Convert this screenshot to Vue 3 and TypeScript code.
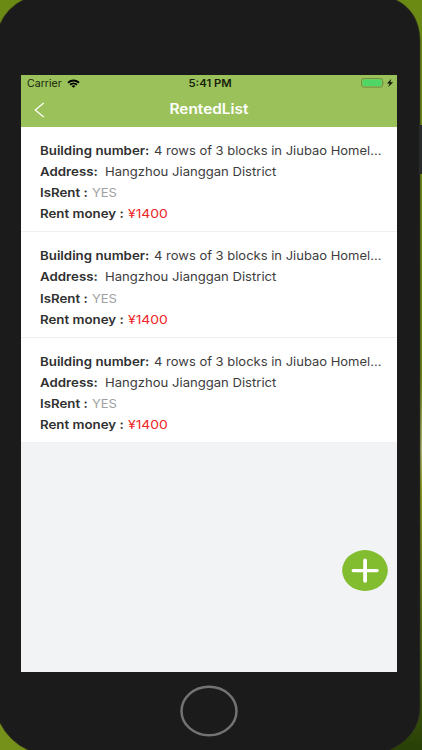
<script setup lang="ts">
interface Rental {
  id: number
  building: string
  address: string
  rented: string
  money: string
}

const rentals: Rental[] = [1, 2, 3].map((id) => ({
  id,
  building: '4 rows of 3 blocks in Jiubao Homel...',
  address: 'Hangzhou Jianggan District',
  rented: 'YES',
  money: '¥1400',
}))
</script>

<template>
  <div class="stage">
    <svg class="backdrop" viewBox="0 0 422 750" aria-hidden="true">
      <defs>
        <linearGradient id="leaf" x1="0" y1="0" x2="0" y2="1">
          <stop offset="0" stop-color="#6b8a14" />
          <stop offset="0.5" stop-color="#6c8516" />
          <stop offset="0.6" stop-color="#a9b070" />
          <stop offset="0.65" stop-color="#8b9b22" />
          <stop offset="0.88" stop-color="#476012" />
          <stop offset="1" stop-color="#294006" />
        </linearGradient>
      </defs>
      <rect width="422" height="750" fill="url(#leaf)" />
      <rect y="700" width="60" height="50" fill="#769119" />
      <path
        d="M-1 26Q7 7 25 -1H394C410 6 420 20 420 42V707C420 726 410 741 388 751H30Q9 742 -1 721Z"
        fill="#1b1b1b"
        stroke="#34371f"
        stroke-width=".7"
      />
      <rect x="419" y="125" width="5" height="49" fill="#292a2a" />
    </svg>

    <main class="screen">
      <div class="status">
        <div class="carrier">
          <span>Carrier</span>
          <svg class="wifi" viewBox="0 0 13 9">
            <path d="M.3 3Q6.5-1.8 12.7 3L11.4 4.4Q6.5.8 1.6 4.4ZM2.4 5.1Q6.5 1.9 10.6 5.1L9.3 6.4Q6.5 4.3 3.7 6.4ZM4.5 6.9Q6.5 5.5 8.5 6.9L6.5 8.8Z" />
          </svg>
        </div>
        <span class="time">5:41 PM</span>
        <svg class="battery" viewBox="0 0 33 10">
          <rect x=".6" y=".6" width="21" height="8.5" rx="2" fill="none" stroke="#638b3c" stroke-width=".9" />
          <rect x="1.7" y="1.6" width="18.8" height="6.5" rx="1" fill="#4fd765" />
          <path d="M22.6 3.4Q24 4.8 22.6 6.2Z" fill="#638b3c" />
          <path d="M30.3 .8L26 5.4H28.6L27.2 9L32.2 4.2H29.3Z" fill="#101608" />
        </svg>
      </div>
      <header class="nav">
        <svg class="back" viewBox="0 0 11 16">
          <path d="M9.7 1L1.2 8L9.7 15" fill="none" stroke="#fff" stroke-width="1.2" />
        </svg>
        <h1>RentedList</h1>
      </header>

      <section class="list">
        <article v-for="item in rentals" :key="item.id" class="card">
          <p><b class="building-label">Building number:</b><span>{{ item.building }}</span></p>
          <p><b class="address-label">Address:</b><span class="address">{{ item.address }}</span></p>
          <p><b class="rent-label">IsRent :</b><span class="rented">{{ item.rented }}</span></p>
          <p><b class="money-label">Rent money :</b><span class="money">{{ item.money }}</span></p>
        </article>
      </section>

      <button class="add" aria-label="Add">
        <svg viewBox="0 0 46 42">
          <ellipse cx="23" cy="20.5" rx="22.8" ry="20.4" fill="#82bc2f" />
          <path d="M11.2 20.6H35.1" fill="none" stroke="#fff" stroke-width="3.2" stroke-linecap="round" />
          <path d="M23.1 10.3V30.8" fill="none" stroke="#fff" stroke-width="3.8" stroke-linecap="round" />
        </svg>
      </button>
    </main>

    <footer class="home">
      <svg viewBox="0 0 60 52">
        <ellipse cx="30" cy="26" rx="27.5" ry="24.3" fill="none" stroke="#737373" stroke-width="2.5" />
      </svg>
    </footer>
  </div>
</template>

<style>
body {
  background: #1b1b1b;
}
</style>

<style scoped>
.stage {
  position: relative;
  isolation: isolate;
  box-sizing: border-box;
  width: 422px;
  height: 750px;
  padding: 75px 25px 0 21px;
  overflow: hidden;
  font-family: Inter, "Liberation Sans", sans-serif;
}
.backdrop {
  position: absolute;
  inset: 0;
  z-index: -1;
  width: 422px;
  height: 750px;
}
.screen {
  position: relative;
  width: 376px;
  height: 596.5px;
  background: #f1f3f5;
}
.status {
  display: grid;
  grid-template-columns: 1fr auto 1fr;
  align-items: center;
  box-sizing: border-box;
  height: 17px;
  padding: 0 3px 1px 6px;
  background: #9bc25a;
  color: #171e0c;
  font-size: 10px;
}
.carrier {
  display: flex;
  align-items: center;
  gap: 7px;
}
.carrier span {
  transform: scaleX(1.06);
  transform-origin: left;
}
.wifi {
  width: 13px;
  height: 9px;
}
.time {
  font-weight: 600;
  transform: scaleX(1.13);
}
.battery {
  justify-self: end;
  width: 33px;
  height: 10px;
}
.nav {
  display: grid;
  grid-template-columns: 40px 1fr 40px;
  align-items: center;
  height: 34.5px;
  background: #9bc25a;
}
.back {
  width: 11px;
  height: 16px;
  margin: 1px 0 0 13px;
}
h1 {
  margin: 0;
  color: #fff;
  font-size: 13.8px;
  font-weight: 600;
  text-align: center;
  transform: scaleX(1.115);
}
.list {
  padding-top: 0.5px;
}
.card {
  box-sizing: border-box;
  height: 105.33px;
  padding: 13px 0 0 18.5px;
  border-bottom: 1px solid #f0f0f1;
  background: #fff;
  color: #3d3d3d;
}
p {
  display: flex;
  align-items: center;
  height: 21.1px;
  margin: 0;
  font-size: 12.2px;
  white-space: nowrap;
}
b {
  flex: none;
  color: #303030;
  font-weight: 600;
  transform: scaleX(1.09);
  transform-origin: left;
}
p span {
  transform: scaleX(1.065);
  transform-origin: left;
}
.building-label { width: 114px; }
.address-label { width: 65px; }
.rent-label { width: 52.5px; }
.money-label { width: 88px; }
p .rented {
  color: #a0a0a0;
}
p .address {
  transform: scaleX(1.073);
}
p .money {
  color: #ed2529;
  transform: scaleX(1.14);
}
.add {
  position: absolute;
  right: 9px;
  bottom: 80px;
  width: 46px;
  height: 42px;
  padding: 0;
  border: 0;
  background: none;
}
.add svg {
  display: block;
}
.home {
  display: flex;
  justify-content: center;
  padding-top: 13.8px;
}
.home svg {
  width: 60px;
  height: 52px;
}
</style>
